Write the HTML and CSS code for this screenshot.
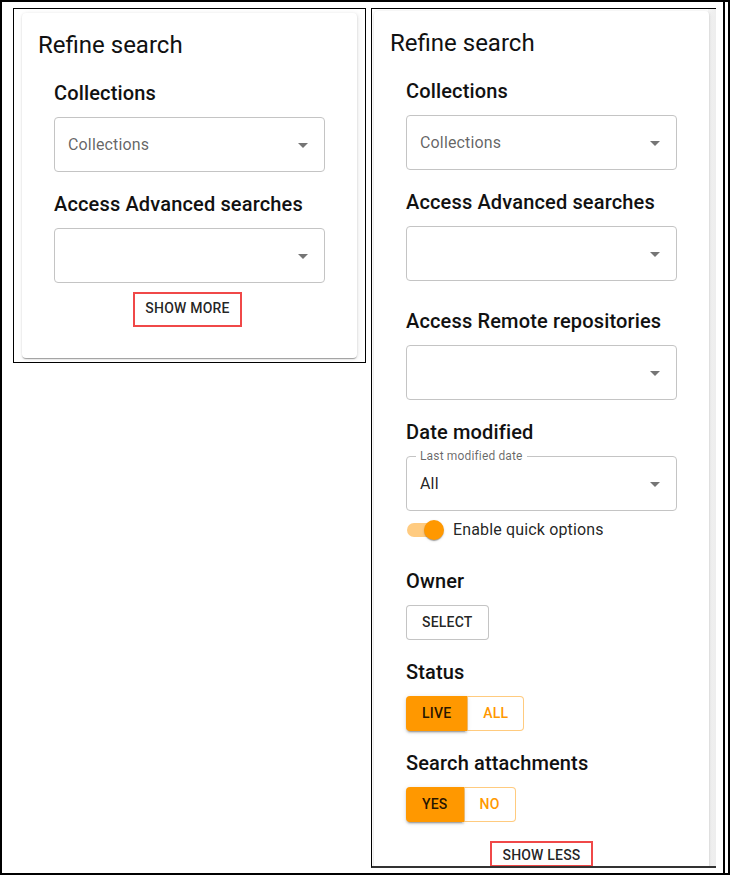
FILE: index.html
```html
<!DOCTYPE html>
<html lang="en">
<head>
<meta charset="utf-8">
<title>Refine search</title>
<link rel="stylesheet" href="styles.css">
</head>
<body>
<div class="frame">
  <div class="shot shot-left">
    <div class="card">
      <h2 class="title">Refine search</h2>
      <div class="content">
        <div class="section">
          <h3 class="section-title">Collections</h3>
          <div class="select"><span class="placeholder">Collections</span><svg class="arrow" viewBox="0 0 24 24" width="24" height="24"><path d="M7 10l5 5 5-5z"/></svg></div>
        </div>
        <div class="section">
          <h3 class="section-title">Access Advanced searches</h3>
          <div class="select"><span></span><svg class="arrow" viewBox="0 0 24 24" width="24" height="24"><path d="M7 10l5 5 5-5z"/></svg></div>
        </div>
        <div class="annot annot-more"><button class="annot-btn">SHOW MORE</button></div>
      </div>
    </div>
  </div>

  <div class="shot shot-right">
    <div class="card">
      <h2 class="title">Refine search</h2>
      <div class="content">
        <div class="section">
          <h3 class="section-title">Collections</h3>
          <div class="select"><span class="placeholder">Collections</span><svg class="arrow" viewBox="0 0 24 24" width="24" height="24"><path d="M7 10l5 5 5-5z"/></svg></div>
        </div>
        <div class="section">
          <h3 class="section-title">Access Advanced searches</h3>
          <div class="select"><span></span><svg class="arrow" viewBox="0 0 24 24" width="24" height="24"><path d="M7 10l5 5 5-5z"/></svg></div>
        </div>
        <div class="expanded">
          <div class="section">
            <h3 class="section-title">Access Remote repositories</h3>
            <div class="select"><span></span><svg class="arrow" viewBox="0 0 24 24" width="24" height="24"><path d="M7 10l5 5 5-5z"/></svg></div>
          </div>
          <div class="section">
            <h3 class="section-title">Date modified</h3>
            <div class="select labeled"><span class="float-label">Last modified date</span><span class="value">All</span><svg class="arrow" viewBox="0 0 24 24" width="24" height="24"><path d="M7 10l5 5 5-5z"/></svg></div>
            <div class="switch-row">
              <span class="switch"><span class="track"></span><span class="thumb"></span></span>
              <span class="switch-label">Enable quick options</span>
            </div>
          </div>
          <div class="section">
            <h3 class="section-title">Owner</h3>
            <button class="obtn">SELECT</button>
          </div>
          <div class="section">
            <h3 class="section-title">Status</h3>
            <div class="btn-group"><button class="gbtn contained">LIVE</button><button class="gbtn outlined">ALL</button></div>
          </div>
          <div class="section">
            <h3 class="section-title">Search attachments</h3>
            <div class="btn-group"><button class="gbtn contained">YES</button><button class="gbtn outlined">NO</button></div>
          </div>
        </div>
        <div class="annot annot-less"><button class="annot-btn short">SHOW LESS</button></div>
      </div>
    </div>
  </div>

  <div class="divider"></div>
</div>
</body>
</html>
```

FILE: styles.css
```css
html, body {
  margin: 0;
  padding: 0;
  background: #fff;
}

body {
  font-family: Roboto, "Liberation Sans", Arial, sans-serif;
  color: rgba(0, 0, 0, 0.87);
}

.frame {
  width: 730px;
  height: 875px;
  box-sizing: border-box;
  border: 2px solid #000;
  display: flex;
  align-items: flex-start;
  overflow: hidden;
}

.shot {
  box-sizing: border-box;
  margin-top: 6px;
  flex: none;
}

.shot-left {
  width: 353px;
  margin-left: 11px;
  border: 1px solid #000;
  padding: 4px 8px 4px 8px;
}

.shot-right {
  width: 345px;
  height: 860px;
  margin-left: 5px;
  border-top: 1px solid #000;
  border-left: 1px solid #000;
  border-bottom: 2px solid #333;
  padding: 2px 0 0 2px;
  overflow: hidden;
  background: linear-gradient(to right, #fff 0, #fff 336px, #f8f8f8 336px, #ededed 344px);
}

.divider {
  flex: none;
  align-self: stretch;
  width: 2px;
  margin-left: 7px;
  background: #000;
}

.card {
  width: 335px;
  box-sizing: border-box;
  background: #fff;
  border-radius: 4px;
  padding: 16px;
  box-shadow: 0 2px 1px -1px rgba(0, 0, 0, 0.2), 0 1px 1px 0 rgba(0, 0, 0, 0.14), 0 1px 3px 0 rgba(0, 0, 0, 0.12), 2px 0 5px rgba(0, 0, 0, 0.05);
}

.title {
  margin: 0;
  font-size: 24px;
  line-height: 32px;
  font-weight: 400;
  color: #111;
}

.content {
  padding: 0 16px;
}

.section {
  margin-top: 16px;
}

.expanded {
  padding-top: 8px;
}

.section-title {
  margin: 0 0 8px;
  font-size: 20px;
  line-height: 32px;
  font-weight: 500;
  letter-spacing: 0.15px;
  color: #111;
}

.select {
  position: relative;
  height: 55px;
  box-sizing: border-box;
  border: 1px solid #c4c4c4;
  border-radius: 4px;
  padding: 0 9px 0 13px;
  display: flex;
  align-items: center;
  justify-content: space-between;
  font-size: 16px;
  letter-spacing: 0.15px;
}

.placeholder {
  color: rgba(0, 0, 0, 0.62);
}

.value {
  color: rgba(0, 0, 0, 0.87);
}

.arrow {
  flex: none;
  fill: rgba(0, 0, 0, 0.54);
}

.float-label {
  position: absolute;
  top: -7px;
  left: 9px;
  padding: 0 4px;
  background: #fff;
  font-size: 12px;
  line-height: 12px;
  letter-spacing: 0.15px;
  color: rgba(0, 0, 0, 0.6);
}

.switch-row {
  display: flex;
  align-items: center;
  margin-left: -11px;
}

.switch {
  position: relative;
  flex: none;
  width: 58px;
  height: 38px;
}

.track {
  position: absolute;
  left: 12px;
  top: 12px;
  width: 34px;
  height: 14px;
  border-radius: 7px;
  background: #ffcb80;
}

.thumb {
  position: absolute;
  left: 29px;
  top: 9px;
  width: 20px;
  height: 20px;
  border-radius: 50%;
  background: #ff9800;
  box-shadow: 0 2px 1px -1px rgba(0, 0, 0, 0.2), 0 1px 1px 0 rgba(0, 0, 0, 0.14), 0 1px 3px 0 rgba(0, 0, 0, 0.12);
}

.switch-label {
  font-size: 16px;
  line-height: 24px;
  letter-spacing: 0.15px;
}

button {
  font-family: Roboto, "Liberation Sans", Arial, sans-serif;
  font-size: 14px;
  font-weight: 500;
  letter-spacing: 0.2px;
  text-transform: uppercase;
  line-height: 23px;
  cursor: pointer;
  margin: 0;
}

.obtn {
  display: block;
  background: #fff;
  color: rgba(0, 0, 0, 0.87);
  border: 1px solid rgba(0, 0, 0, 0.23);
  border-radius: 4px;
  padding: 5px 15px;
}

.btn-group {
  display: inline-flex;
}

.gbtn {
  display: block;
}

.gbtn.contained {
  background: #ff9800;
  color: rgba(0, 0, 0, 0.87);
  border: none;
  padding: 6px 16px;
  border-radius: 4px 0 0 4px;
  box-shadow: 0 3px 1px -2px rgba(0, 0, 0, 0.2), 0 2px 2px 0 rgba(0, 0, 0, 0.14), 0 1px 5px 0 rgba(0, 0, 0, 0.12);
  position: relative;
}

.gbtn.outlined {
  background: #fff;
  color: #ff9800;
  border: 1px solid rgba(255, 152, 0, 0.5);
  padding: 5px 15px;
  border-radius: 0 4px 4px 0;
}

.annot {
  display: flex;
  justify-content: center;
}

.annot-more {
  margin-top: 9px;
  margin-bottom: 15px;
  padding-right: 4px;
}

.annot-less {
  margin-top: 19px;
}

.annot-btn {
  box-sizing: border-box;
  height: 35px;
  background: #fff;
  color: rgba(0, 0, 0, 0.87);
  border: 2px solid #f04848;
  padding: 0 10px 2px;
  line-height: 29px;
}

.annot-btn.short {
  height: 26px;
  padding: 0 10px;
  line-height: 24px;
  overflow: visible;
}
```
